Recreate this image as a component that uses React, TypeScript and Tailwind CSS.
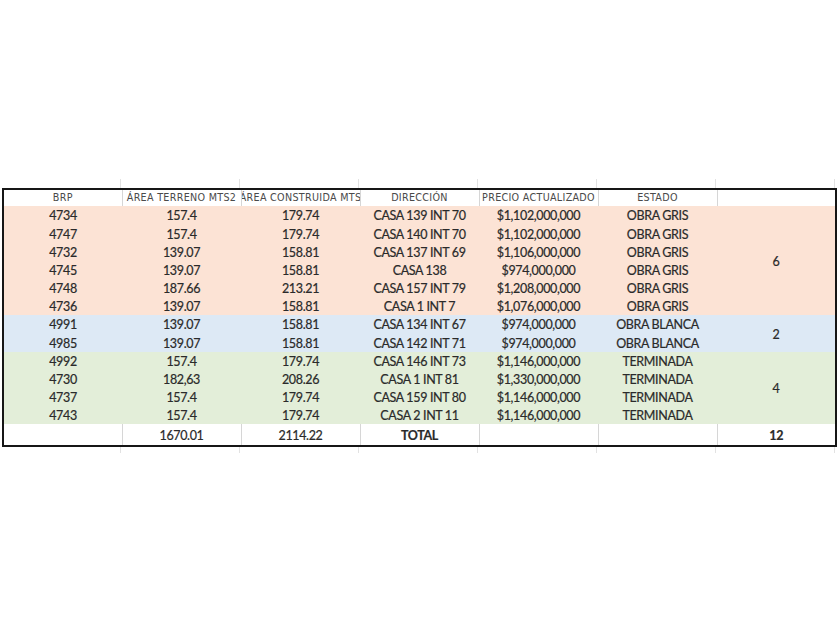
const headers = [
  "BRP",
  "ÁREA TERRENO MTS2",
  "ÁREA CONSTRUIDA MTS",
  "DIRECCIÓN",
  "PRECIO ACTUALIZADO",
  "ESTADO",
  "",
];

type Row = [string, string, string, string, string, string];

const groups: { bg: string; count: string; rows: Row[] }[] = [
  {
    bg: "bg-[#fce3d5]",
    count: "6",
    rows: [
      ["4734", "157.4", "179.74", "CASA 139 INT 70", "$1,102,000,000", "OBRA GRIS"],
      ["4747", "157.4", "179.74", "CASA 140 INT 70", "$1,102,000,000", "OBRA GRIS"],
      ["4732", "139.07", "158.81", "CASA 137 INT 69", "$1,106,000,000", "OBRA GRIS"],
      ["4745", "139.07", "158.81", "CASA 138", "$974,000,000", "OBRA GRIS"],
      ["4748", "187.66", "213.21", "CASA 157 INT 79", "$1,208,000,000", "OBRA GRIS"],
      ["4736", "139.07", "158.81", "CASA 1 INT 7", "$1,076,000,000", "OBRA GRIS"],
    ],
  },
  {
    bg: "bg-[#dde9f5]",
    count: "2",
    rows: [
      ["4991", "139.07", "158.81", "CASA 134 INT 67", "$974,000,000", "OBRA BLANCA"],
      ["4985", "139.07", "158.81", "CASA 142 INT 71", "$974,000,000", "OBRA BLANCA"],
    ],
  },
  {
    bg: "bg-[#e3eed9]",
    count: "4",
    rows: [
      ["4992", "157.4", "179.74", "CASA 146 INT 73", "$1,146,000,000", "TERMINADA"],
      ["4730", "182,63", "208.26", "CASA 1 INT 81", "$1,330,000,000", "TERMINADA"],
      ["4737", "157.4", "179.74", "CASA 159 INT 80", "$1,146,000,000", "TERMINADA"],
      ["4743", "157.4", "179.74", "CASA 2 INT 11", "$1,146,000,000", "TERMINADA"],
    ],
  },
];

const totals = ["", "1670.01", "2114.22", "TOTAL", "", "", "12"];

function GridStub({ h }: { h: string }) {
  return (
    <div className={`flex w-[836px] ${h}`}>
      {headers.map((_, i) => (
        <div key={i} className="w-[119px] shrink-0 border-r border-[#e2e2e2]" />
      ))}
    </div>
  );
}

export default function App() {
  return (
    <div className="h-[630px] w-[840px] bg-white pl-[2px] pt-[179px] font-['Lato','Liberation_Sans',sans-serif] text-[#2a2a2a] [-webkit-text-stroke:0.2px]">
      <GridStub h="h-[9px]" />
      <table className="w-[835px] table-fixed border-collapse border-2 border-[#161616]">
        <colgroup>
          {headers.map((_, i) => (
            <col key={i} className="w-[119px]" />
          ))}
        </colgroup>
        <thead>
          <tr className="h-[16px] bg-white">
            {headers.map((h, i) => (
              <th
                key={i}
                className={`overflow-hidden p-0 font-normal ${i < 6 ? "border-r border-[#d6d6d6]" : ""}`}
              >
                <div className="flex h-[16px] items-center justify-center overflow-hidden whitespace-nowrap font-['DejaVu_Sans',sans-serif] text-[9.6px] leading-[16px] tracking-[0.3px] text-[#4a4a4a] [-webkit-text-stroke:0px]">
                  {h}
                </div>
              </th>
            ))}
          </tr>
        </thead>
        <tbody>
          {groups.map((g) =>
            g.rows.map((r, ri) => (
              <tr key={r[0]} className={`h-[18.2px] ${g.bg}`}>
                {r.map((c, ci) => (
                  <td key={ci} className="p-0 pt-[3px] text-center text-[12.5px] leading-none tracking-[-0.35px]">
                    {c}
                  </td>
                ))}
                {ri === 0 && (
                  <td rowSpan={g.rows.length} className="p-0 pt-[3px] text-center text-[12.5px] leading-none">
                    {g.count}
                  </td>
                )}
              </tr>
            ))
          )}
          <tr className="h-[22px] bg-white">
            {totals.map((t, i) => (
              <td
                key={i}
                className={`p-0 pt-[3px] text-center text-[12.5px] leading-none tracking-[-0.35px] ${i < 6 ? "border-r border-[#d6d6d6]" : ""} ${
                  t === "TOTAL" || t === "12" ? "font-bold" : ""
                }`}
              >
                {t}
              </td>
            ))}
          </tr>
        </tbody>
      </table>
      <GridStub h="h-[6px]" />
    </div>
  );
}
